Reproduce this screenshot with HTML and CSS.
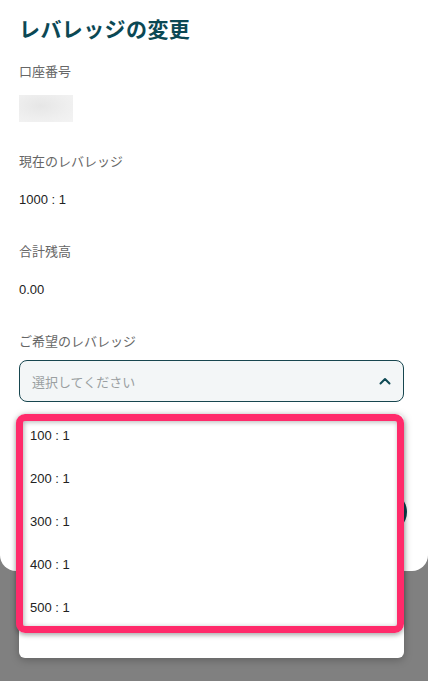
FILE: index.html
```html
<!DOCTYPE html>
<html lang="ja">
<head>
<meta charset="utf-8">
<title>レバレッジの変更</title>
<link rel="stylesheet" href="styles.css">
</head>
<body>
<div class="sheet">
  <h1 class="title">レバレッジの変更</h1>
  <div class="field">
    <div class="label">口座番号</div>
    <div class="masked"></div>
  </div>
  <div class="field">
    <div class="label">現在のレバレッジ</div>
    <div class="value">1000 : 1</div>
  </div>
  <div class="field">
    <div class="label">合計残高</div>
    <div class="value">0.00</div>
  </div>
  <div class="field field-select">
    <div class="label">ご希望のレバレッジ</div>
    <div class="select-wrap">
      <div class="select">
        <span class="placeholder">選択してください</span>
        <svg class="chevron" width="12" height="8" viewBox="0 0 12 8"><path d="M1.5 6.5 L6 2 L10.5 6.5" fill="none" stroke="#0d4a55" stroke-width="2" stroke-linecap="round" stroke-linejoin="round"/></svg>
      </div>
      <ul class="menu">
        <li class="option">100 : 1</li>
        <li class="option">200 : 1</li>
        <li class="option">300 : 1</li>
        <li class="option">400 : 1</li>
        <li class="option">500 : 1</li>
      </ul>
      <div class="highlight"></div>
    </div>
  </div>
  <button class="submit">変更する</button>
</div>
</body>
</html>
```
FILE: styles.css
```css
html, body {
  margin: 0;
  padding: 0;
}
body {
  background: #808080;
  font-family: "Liberation Sans", "Noto Sans CJK JP", sans-serif;
  height: 681px;
  overflow: hidden;
}
.sheet {
  background: #ffffff;
  border-radius: 0 0 16px 16px;
  padding: 14px 24px 39px 19px;
  display: flex;
  flex-direction: column;
}
.title {
  margin: 0 0 16px 0;
  font-size: 21px;
  line-height: 32px;
  font-weight: 700;
  color: #0b4854;
  letter-spacing: 0.4px;
}
.field {
  display: flex;
  flex-direction: column;
  gap: 18px;
  margin-bottom: 32px;
}
.field:first-of-type {
  gap: 13px;
  margin-bottom: 35px;
}
.label {
  font-size: 13px;
  line-height: 20px;
  color: #666666;
}
.value {
  font-size: 13px;
  line-height: 20px;
  color: #222222;
}
.masked {
  width: 54px;
  height: 27px;
  background: radial-gradient(ellipse at 40% 40%, #e6e6e6 0%, #efefef 60%, #f3f3f3 100%);
  margin-bottom: -5px;
}
.field-select {
  gap: 8px;
  margin-bottom: 0;
}
.select-wrap {
  position: relative;
}
.select {
  height: 40px;
  border: 1px solid #17464f;
  border-radius: 8px;
  background: #f3f6f7;
  display: flex;
  align-items: center;
  justify-content: space-between;
  padding: 0 12px 0 12px;
}
.placeholder {
  font-size: 13px;
  color: #9a9fa1;
}
.chevron {
  display: block;
}
.menu {
  position: absolute;
  top: 54px;
  left: 0;
  right: 0;
  height: 244px;
  margin: 0;
  padding: 0;
  list-style: none;
  background: #ffffff;
  border-radius: 6px;
  box-shadow: 0 2px 8px rgba(0, 0, 0, 0.25);
  z-index: 2;
}
.option {
  height: 43px;
  line-height: 43px;
  padding-left: 11px;
  font-size: 13px;
  color: #222222;
}
.highlight {
  position: absolute;
  top: 54px;
  left: -3px;
  width: 388px;
  height: 219px;
  box-sizing: border-box;
  border: 7px solid #ff2a6a;
  border-radius: 9px;
  box-shadow: 0 2px 5px rgba(0, 0, 0, 0.35), inset 1px 1px 5px rgba(0, 0, 0, 0.3);
  z-index: 3;
  pointer-events: none;
}
.submit {
  margin-top: 90px;
  margin-right: -3px;
  height: 40px;
  border: none;
  border-radius: 20px;
  background: #0b4450;
  color: #ffffff;
  font-family: inherit;
  font-size: 14px;
  font-weight: 700;
}
```
